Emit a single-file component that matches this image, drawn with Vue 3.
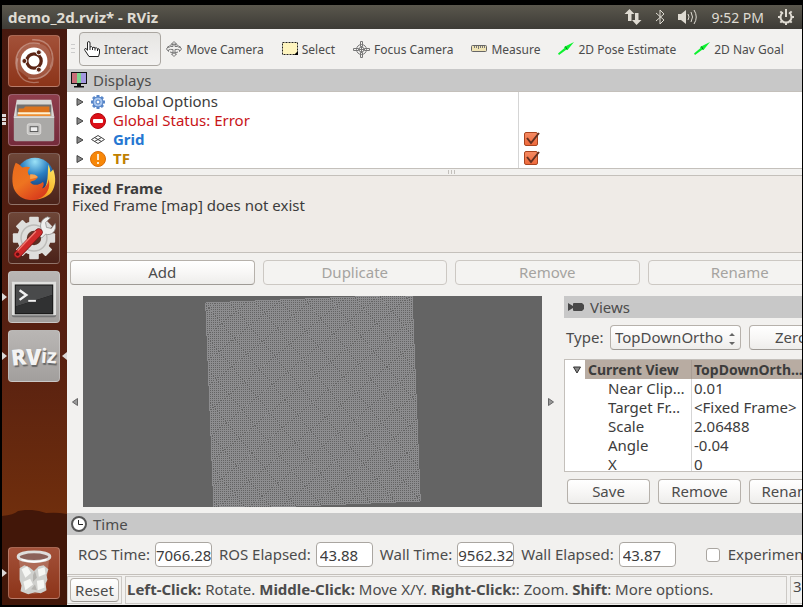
<script setup>
import { ref } from 'vue'

const tools = [
  { name: 'Interact', icon: 'hand' },
  { name: 'Move Camera', icon: 'move' },
  { name: 'Select', icon: 'select' },
  { name: 'Focus Camera', icon: 'focus' },
  { name: 'Measure', icon: 'ruler' },
  { name: '2D Pose Estimate', icon: 'arrow' },
  { name: '2D Nav Goal', icon: 'arrow' },
]
const activeTool = ref('Interact')

const displays = ref([
  { name: 'Global Options', icon: 'gear', kind: 'plain' },
  { name: 'Global Status: Error', icon: 'error', kind: 'error' },
  { name: 'Grid', icon: 'grid', kind: 'ok', toggle: true, on: true },
  { name: 'TF', icon: 'warn', kind: 'warn', toggle: true, on: true },
])

const properties = [
  ['Near Clip…', '0.01'],
  ['Target Fr…', '<Fixed Frame>'],
  ['Scale', '2.06488'],
  ['Angle', '-0.04'],
  ['X', '0'],
]

const times = [
  { label: 'ROS Time:', value: '7066.28', cut: true },
  { label: 'ROS Elapsed:', value: '43.88' },
  { label: 'Wall Time:', value: '9562.32', cut: true },
  { label: 'Wall Elapsed:', value: '43.87' },
]

// Grid display: 100 x 100 cells seen from above at the view's scale and angle.
const scale = 2.06488
const angle = 0.04
const half = 50 * scale
const cos = Math.cos(angle)
const sin = Math.sin(angle)
const project = (x, y) => `${(x * cos + y * sin).toFixed(3)} ${(y * cos - x * sin).toFixed(3)}`
let gridPath = ''
for (let i = -50; i <= 50; i++) {
  const p = i * scale
  gridPath += `M${project(p, -half)}L${project(p, half)}M${project(-half, p)}L${project(half, p)}`
}

const gearTeeth = [0, 45, 90, 135, 180, 225, 270, 315]
</script>

<template>
  <div class="screen">
    <header class="topbar">
      <h1>demo_2d.rviz* - RViz</h1>
      <div class="indicators">
        <svg width="18" height="18" viewBox="0 0 18 18"><path d="M5.500 1L10.500 6H7.500v7H4V6H.5z" /><path d="M12.500 17L17.500 12h-3V5H11v7H8z" /></svg>
        <svg width="10" height="18" viewBox="0 0 10 18"><path class="line" d="M1 5l8 7-4 4V2l4 4-8 7" /></svg>
        <svg width="20" height="18" viewBox="0 0 20 18"><path d="M0 6h3l5-4v14l-5-4H0z" /><path class="line" d="M10 6q2 3 0 6M13 4q3 5 0 10M16 2q4.500 7 0 14" /></svg>
        <time>9:52 PM</time>
        <svg width="18" height="18" viewBox="0 0 18 18">
          <path class="ring" d="M6 4.500a5.500 5.500 0 1 0 6 0" />
          <rect x="8" y="1" width="2" height="8" />
          <rect v-for="a in gearTeeth.slice(1)" :key="a" x="8" y="1" width="2" height="3" :transform="`rotate(${a} 9 9)`" />
        </svg>
      </div>
    </header>

    <nav class="launcher" aria-label="Launcher">
      <button class="tile orange" aria-label="Dash">
        <svg viewBox="0 0 52 52">
          <g fill="none" stroke="#fff" stroke-opacity=".3" stroke-width="1.500"><path d="M8 34C4 16 16 4 32 8M24 4c18-1 25 13 19 29M45 18c4 18-10 29-25 26M31 48C14 51 5 38 9 23" /></g>
          <path d="M8 34C4 16 16 4 32 8c9 2 14 10 11 25-3 12-18 15-25 9" fill="#fff" opacity=".14" />
          <circle cx="26" cy="26" r="14" fill="#fff" />
          <circle cx="26" cy="26" r="7.500" fill="none" stroke="#5b2414" stroke-width="3.400" />
          <g stroke="#fff" stroke-width="1"><circle cx="16" cy="26" r="2.600" fill="#5b2414" /><circle cx="31" cy="17" r="2.600" fill="#5b2414" /><circle cx="31" cy="35" r="2.600" fill="#5b2414" /></g>
        </svg>
      </button>
      <button class="tile plum pips" aria-label="Files">
        <svg viewBox="0 0 52 52">
          <path d="M8 5h36l3 17H5z" fill="#d8d8d5" /><path d="M8 10h36v14H8z" fill="#72706e" />
          <path d="M10 14h5l2-2h25v12H10z" fill="#dc741d" /><path d="M9 18h34v4H9z" fill="#fff0d0" /><path d="M9 20h34v3H9z" fill="#ee8e31" />
          <path d="M5 22h42v24q0 2-2 2H7q-2 0-2-2z" fill="#aaa9a7" /><path d="M5 22h42v2H5z" fill="#dedddb" />
          <rect x="19" y="30" width="14" height="11" rx="2" fill="#c6c5c3" stroke="#dddcda" /><rect x="22" y="33" width="8" height="5" fill="#eee" stroke="#555" />
        </svg>
      </button>
      <button class="tile dark" aria-label="Firefox">
        <svg viewBox="0 0 52 52">
          <defs>
            <radialGradient id="globe" cx=".5" cy=".1" r=".8"><stop offset="0" stop-color="#9be2f7" /><stop offset=".45" stop-color="#2a7fc2" /><stop offset="1" stop-color="#122b66" /></radialGradient>
            <linearGradient id="fox" x1="0" y1="0" x2=".7" y2="1"><stop offset="0" stop-color="#e96a1c" /><stop offset=".5" stop-color="#ee7420" /><stop offset="1" stop-color="#d83a1c" /></linearGradient>
            <linearGradient id="tail" x1="1" y1="0" x2=".3" y2="1"><stop offset="0" stop-color="#fdea6a" /><stop offset=".6" stop-color="#f8b62c" /><stop offset="1" stop-color="#e8641d" /></linearGradient>
          </defs>
          <circle cx="27" cy="24" r="20" fill="url(#globe)" />
          <path d="M41 11c1 3 2 5 2 8l3-3c3 8 3 17-2 24-8 9-24 10-33 2 12 3 25-1 28-11 2-7 1-14 2-20z" fill="url(#tail)" />
          <path d="M7 9c3 1 5 3 7 5 3-1 6-1 8 0-3 3-3 5-1 8 3 0 6 0 9 2-1 3-5 4-8 5 3 5 10 3 13 0 2 1 1 5-1 7 4-1 7-5 7-10 3 9-2 17-9 20-11 5-23 0-27-10C2 27 4 15 7 9z" fill="url(#fox)" />
          <path d="M22 21c3 0 6 0 8 3-2 1-5 2-8 2z" fill="#f7a24f" />
        </svg>
      </button>
      <button class="tile dark" aria-label="System Settings">
        <svg viewBox="0 0 52 52">
          <g fill="#dededc"><rect v-for="a in gearTeeth" :key="a" x="21" y="4" width="10" height="12" rx="1" :transform="`rotate(${a} 26 26)`" /></g>
          <circle cx="26" cy="26" r="12.500" fill="none" stroke="#dededc" stroke-width="10" /><circle cx="26" cy="26" r="13.500" fill="none" stroke="#bcbbb8" stroke-width="1.500" />
          <path d="M30 22l4-4c-3-6 0-12 6-14l3 1-5 5 1 5 5 1 4-5c2 8-4 13-10 11l-4 4z" fill="#efefed" stroke="#8d8c8a" stroke-width=".8" />
          <path d="M9 43L31 20" stroke="#7e1416" stroke-width="8" stroke-linecap="round" /><path d="M9 43L31 20" stroke="#cf2b2b" stroke-width="6.500" stroke-linecap="round" /><path d="M9 39L28 19" stroke="#ee7b72" stroke-width="1.500" /><circle cx="9" cy="43" r="1.800" fill="#5f0f12" />
        </svg>
      </button>
      <button class="tile grey running" aria-label="Terminal">
        <svg viewBox="0 0 52 52">
          <rect x="3" y="10" width="46" height="37" rx="2" fill="#747474" /><rect x="3" y="10" width="46" height="35" rx="1" fill="#e0e0de" /><rect x="6" y="13" width="40" height="31" fill="#151515" />
          <path d="M7 14h38v10L7 36z" fill="#494a4b" /><path d="M7 36l38-12v19H7z" fill="#303132" />
          <path d="M11 19l7 5-7 5" fill="none" stroke="#f2f2f2" stroke-width="2.500" /><path d="M20 30h8" stroke="#f2f2f2" stroke-width="2" />
        </svg>
      </button>
      <button class="tile grey running focused" aria-label="RViz"><span class="rviz"><b>R</b><b>V</b><i>i</i><i>z</i></span></button>
      <button class="tile orange running trash" aria-label="Trash">
        <svg viewBox="0 0 52 52">
          <path d="M10 9h32l-4 36q-12 5-24 0z" fill="#fff" opacity=".2" />
          <path d="M11 21l5-3 5 2 5 4 5-5 5-1 5 4-2 6 1 5-2 4 1 7-6 3-6-1-7 2-8-3 1-6-2-6z" fill="#d0d1ce" />
          <path d="M13 22l6-3 4 7-6 5zM30 22l7-2 1 7-7 3zM15 35l7-3 3 6-8 6zM29 34l7-1 1 8-7 3z" fill="#f5f6f3" /><path d="M25 28l2-4 2 7-4 4zM23 43l4-5 2 6z" fill="#b4b3af" />
          <ellipse cx="26" cy="9" rx="16.500" ry="5" fill="#8b625a" stroke="#dededc" stroke-width="3" /><path d="M13 12q13 5 26 0" stroke="#fff" stroke-width="1.500" fill="none" />
        </svg>
      </button>
      <svg class="hill" viewBox="0 0 65 95" preserveAspectRatio="none"><path d="M0 6Q12 5 16 1Q30-2 44 3Q55 2 65 4V95H0z" /></svg>
    </nav>

    <main class="window">
      <div class="content">
        <div class="toolbar" role="toolbar" aria-label="Tools">
          <span class="grip"></span>
          <button v-for="t in tools" :key="t.name" class="tool" :class="{ active: activeTool === t.name }" @click="activeTool = t.name">
            <svg v-if="t.icon === 'hand'" width="16" height="16" viewBox="0 0 16 16"><path d="M3.500 9V2q0-1.500 1.200-1.500T6 2v4q2-1 2.500.500 2-.800 2.500.500 2-.500 2.500.700 2-.200 2 1.300v3l-1 3.500H5L1 9.500Q0 8 1.200 7.500t2.300 2M6 6v3M8.500 6.500V9M11 7v2.500M13.500 8v2" fill="#fff" stroke="#222" /></svg>
            <svg v-else-if="t.icon === 'move'" width="16" height="16" viewBox="0 0 16 16"><path d="M8 .5L5.500 3H7v2.500Q4 5 2.500 6.500V5L.5 8l2 2.500V9Q4 8 7 8.500V13H5.500L8 15.500l2.500-2.500H9V8.500Q12 8 13.500 9v1.500l2-2.500-2-3v1.500Q12 5 9 5.500V3h1.500zM3.500 4.500Q8 1.500 12.500 4.500M4 11q4 2 8 0" fill="none" stroke="#777" /></svg>
            <svg v-else-if="t.icon === 'select'" width="16" height="14" viewBox="0 0 16 14"><rect x=".5" y=".5" width="15" height="12" fill="#fff5bf" stroke="#222" stroke-dasharray="2 1" /><path d="M16 9v4h-4z" fill="#000" /></svg>
            <svg v-else-if="t.icon === 'focus'" width="17" height="17" viewBox="0 0 17 17"><g fill="none" stroke="#777"><circle cx="8.500" cy="8.500" r="5" /><circle cx="8.500" cy="8.500" r="2.500" /><path d="M7.500.5h2v5h-2zM7.500 11.500h2v5h-2zM.5 7.500h5v2h-5zM11.500 7.500h5v2h-5zM8.500 5v7M5 8.500h7" /></g></svg>
            <svg v-else-if="t.icon === 'ruler'" width="16" height="8" viewBox="0 0 16 8"><rect x=".5" y=".5" width="15" height="6" rx="1" fill="#efe3b4" stroke="#666" /><path d="M3.500 1v2M5.500 1v2M7.500 1v3M9.500 1v2M11.500 1v2M13.500 1v2" stroke="#777" /></svg>
            <svg v-else width="16" height="14" viewBox="0 0 16 14"><path d="M0 11.500L6.500 6 6 5 16 0 9.500 8 8.500 7.500 1 13z" fill="#0df22f" /><path d="M7.500 4.500l1.500 3" stroke="#067a1a" /></svg>
            <span>{{ t.name }}</span>
          </button>
        </div>

        <h2 class="panel-title">
          <svg width="16" height="16" viewBox="0 0 16 16"><rect x=".5" y=".5" width="15" height="11" fill="#222" stroke="#111" /><path d="M1 1h5v10H1z" fill="#c96e78" /><path d="M6 1h4v10H6z" fill="#7dd58b" /><path d="M10 1h5v10h-5z" fill="#a397df" /><path d="M6 12h4v2h3v1.500H3V14h3z" fill="#111" /></svg>
          Displays
        </h2>
        <ul class="tree">
          <li v-for="d in displays" :key="d.name" :class="d.kind">
            <div class="name">
              <svg class="expander" width="8" height="8" viewBox="0 0 8 8"><path d="M1 .5v7L7 4z" fill="#888" stroke="#444" /></svg>
              <svg v-if="d.icon === 'gear'" class="icon" viewBox="0 0 16 16"><g fill="#5b88c9"><rect v-for="a in gearTeeth" :key="a" x="6.500" y="1" width="3" height="3" :transform="`rotate(${a} 8 8)`" /></g><circle cx="8" cy="8" r="5" fill="#a9c6ee" stroke="#4a7cc4" /><circle cx="8" cy="8" r="2" fill="#fff" stroke="#4a7cc4" /></svg>
              <svg v-else-if="d.icon === 'error'" class="icon" viewBox="0 0 16 16"><circle cx="8" cy="8" r="7.500" fill="#dc1018" stroke="#b2060c" /><rect x="3" y="6" width="10" height="4" rx="1" fill="#fff" /></svg>
              <svg v-else-if="d.icon === 'grid'" class="icon" viewBox="0 0 16 16"><path d="M1.500 7.500l6.500-4 6.500 4-6.500 4zM4.500 5.500l7 4M11.500 5.500l-7 4" fill="none" stroke="#444" /></svg>
              <svg v-else class="icon" viewBox="0 0 16 16"><circle cx="8" cy="8" r="7.500" fill="#f78708" stroke="#d96c05" /><path d="M8 3v6M8 11v2" stroke="#ffe9c8" stroke-width="2" /></svg>
              <span>{{ d.name }}</span>
            </div>
            <label v-if="d.toggle" class="toggle"><input v-model="d.on" type="checkbox" :aria-label="d.name" /><svg v-if="d.on" width="16" height="15" viewBox="0 0 16 15"><path d="M3 6l4 5 8-10" fill="none" stroke="#643020" stroke-width="2" /></svg></label>
          </li>
        </ul>
        <div class="splitter"><i></i><i></i><i></i></div>
        <section class="help"><strong>Fixed Frame</strong><p>Fixed Frame [map] does not exist</p></section>
        <div class="actions">
          <button class="btn">Add</button>
          <button class="btn" disabled>Duplicate</button>
          <button class="btn" disabled>Remove</button>
          <button class="btn" disabled>Rename</button>
        </div>

        <div class="middle">
          <button class="collapse" aria-label="Hide left panels"><svg width="6" height="8" viewBox="0 0 6 8"><path d="M5.500.5v7L.5 4z" fill="#999" stroke="#666" /></svg></button>
          <div class="render">
            <svg viewBox="-110 -110 220 220" width="220" height="220"><path :d="gridPath" /></svg>
          </div>
          <button class="collapse right" aria-label="Hide right panels"><svg width="6" height="8" viewBox="0 0 6 8"><path d="M.5.5v7l5-3.500z" fill="#999" stroke="#666" /></svg></button>
          <section class="views">
            <h2 class="panel-title">
              <svg width="16" height="16" viewBox="0 0 16 16"><path d="M0 4l5 3V5q0-1 1-1h8l2 2v4l-2 2H6q-1 0-1-1V9l-5 3z" fill="#484848" /></svg>
              Views
            </h2>
            <div class="type-row">
              <label for="view-type">Type:</label>
              <div class="combo">
                <select id="view-type" class="btn"><option>TopDownOrtho</option></select>
                <svg width="6" height="12" viewBox="0 0 6 12"><path d="M0 3l3-3 3 3zM0 9l3 3 3-3z" fill="#666" /></svg>
              </div>
              <button class="btn">Zero</button>
            </div>
            <table class="props">
              <thead><tr><th><svg width="8" height="8" viewBox="0 0 8 8"><path d="M.5 1h7L4 7z" fill="#888" stroke="#333" /></svg><span>Current View</span></th><th>TopDownOrth...</th></tr></thead>
              <tbody><tr v-for="[k, v] in properties" :key="k"><td>{{ k }}</td><td>{{ v }}</td></tr></tbody>
            </table>
            <div class="view-actions"><button class="btn">Save</button><button class="btn">Remove</button><button class="btn">Rename</button></div>
          </section>
        </div>

        <h2 class="panel-title">
          <svg width="16" height="16" viewBox="0 0 16 16"><circle cx="8" cy="8" r="7" fill="#fff" stroke="#555" stroke-width="2" /><path d="M7.500 4v4.500H12" fill="none" stroke="#222" /></svg>
          Time
        </h2>
        <div class="times">
          <label v-for="t in times" :key="t.label"><span>{{ t.label }}</span><input type="text" readonly :class="{ cut: t.cut }" :value="t.value" /></label>
          <label class="experimental"><input type="checkbox" />Experimental</label>
        </div>
        <footer class="status">
          <div class="cell"><button class="btn">Reset</button></div>
          <p class="cell hint"><b>Left-Click:</b> Rotate. <b>Middle-Click:</b> Move X/Y. <b>Right-Click:</b>: Zoom. <b>Shift</b>: More options.</p>
          <div class="cell fps">31 fps</div>
        </footer>
      </div>
    </main>
  </div>
</template>

<style>
body { background: #000; }
</style>

<style scoped>
* { box-sizing: border-box; }
h1, h2, p, ul { margin: 0; padding: 0; }
button, input, select { font: inherit; color: inherit; }
button { padding: 0; border: 0; background: none; }
svg { display: block; flex: none; }

.screen {
  display: grid;
  grid-template: 24px minmax(0, 1fr) / 65px minmax(0, 1fr);
  min-height: 100vh;
  padding: 5px 1px 2px 2px;
  background: #000;
  color: #4c4c4c;
  font: 15px/19px "Noto Sans", "Open Sans", sans-serif;
}

.topbar {
  grid-column: 1 / -1;
  display: flex;
  align-items: center;
  justify-content: space-between;
  padding: 0 7px 0 6px;
  background: linear-gradient(#5a574d, #3d3b36);
  color: #dfdbd2;
}
.topbar h1 { font-size: 15px; font-weight: 700; }
.topbar time { font-size: 14px; }
.indicators { display: flex; align-items: center; gap: 13px; }
.indicators svg { fill: #dfdbd2; }
.indicators .line { fill: none; stroke: #dfdbd2; stroke-width: 1; }
.indicators .ring { fill: none; stroke: #dfdbd2; stroke-width: 2; }

.launcher {
  position: relative;
  display: flex;
  flex-direction: column;
  gap: 7px;
  padding: 6px;
  background: linear-gradient(#47190f, #572011 55%, #6c2c0d 80%, #7b370d);
}
.hill { position: absolute; left: 0; bottom: 0; width: 100%; height: 95px; fill: #421709; }
.tile {
  position: relative;
  z-index: 1;
  flex: none;
  width: 52px;
  height: 52px;
  border-radius: 4px;
  border: 1px solid rgba(255, 255, 255, .25);
}
.tile svg { width: 50px; height: 50px; }
.orange { background: linear-gradient(#a35139, #8c3419); }
.plum { background: linear-gradient(#8e3e4c, #752b3b); }
.dark { background: linear-gradient(#6e4638, #4b2219); }
.grey { background: linear-gradient(#b9b6b4, #a29f9d); }
.trash { margin-top: auto; }
.running::before, .focused::after {
  content: "";
  position: absolute;
  top: 21px;
  left: -7px;
  border: solid transparent;
  border-width: 4px 0 4px 5px;
  border-left-color: #dcd9d7;
}
.focused::after { left: auto; right: -8px; border-width: 4px 5px 4px 0; border-right-color: #dcd9d7; }
.pips::before {
  content: "";
  position: absolute;
  top: 19px;
  left: -7px;
  width: 4px;
  height: 11px;
  background: repeating-linear-gradient(#dcd9d7 0 3px, transparent 3px 4px);
}
.rviz {
  display: flex;
  align-items: center;
  justify-content: center;
  color: #f3f3f3;
  font: 700 22px/50px "Open Sans", sans-serif;
  text-shadow: 1px 2px 1px #666;
}
.rviz b:first-child { transform: rotate(-6deg); }
.rviz i { font-size: 20px; font-style: normal; transform: rotate(4deg); }

.window { display: flex; overflow: hidden; background: #f2f1ef; }
/* The window runs past the right edge of the screen. */
.content { flex: none; display: flex; flex-direction: column; width: calc(100% + 34px); }

.toolbar { display: flex; align-items: center; height: 40px; padding-left: 4px; font-size: 12px; }
.grip { width: 4px; height: 10px; margin-right: 4px; background: repeating-linear-gradient(#ccc 0 1px, transparent 1px 4px); }
.tool { display: flex; align-items: center; gap: 4px; padding: 0 9px; height: 34px; }
.tool.active {
  margin-right: -4px;
  padding: 0 12px 0 4px;
  border: 1px solid #aaa6a1;
  border-radius: 4px;
  background: linear-gradient(#e6e5e3, #f3f2f1);
}

.panel-title {
  display: flex;
  flex: none;
  align-items: center;
  gap: 6px;
  height: 22px;
  padding-left: 4px;
  background: #c8c8c8;
  font-size: 15px;
  font-weight: 400;
}

.tree {
  height: 78px;
  border: solid #c4c0bb;
  border-width: 1px 0;
  background: linear-gradient(#d5d5d5, #d5d5d5) 451px 0 / 1px 100% no-repeat #fff;
  color: #3c3c3c;
  list-style: none;
}
.tree li { display: grid; grid-template-columns: 457px auto; align-items: center; height: 19px; }
.name { display: flex; align-items: center; padding-left: 9px; }
.name .expander { margin-right: 6px; }
.name .icon { width: 16px; height: 16px; margin-right: 7px; }
.error { color: #c81418; }
.ok { color: #2577d2; font-weight: 700; }
.warn { color: #c08000; font-weight: 700; }
.toggle { position: relative; width: 16px; height: 15px; }
.toggle input { appearance: none; display: block; width: 14px; height: 14px; margin: 0; border: 1px solid #a9441f; border-radius: 2px; background: linear-gradient(#f58a62, #ee6a3c); }
.toggle svg { position: absolute; inset: 0; }

.splitter { display: flex; flex: none; justify-content: center; gap: 2px; height: 6px; padding: 1px 0; }
.splitter i { width: 1px; background: #c3c0bc; }
.help { flex: none; height: 78px; padding: 4px 5px; border: solid #c4c0bb; border-width: 1px 0; background: #efebe7; color: #3c3c3c; line-height: 17px; }
.help strong { display: block; }

.btn {
  height: 25px;
  border: 1px solid #b6b1ab;
  border-bottom-color: #9e9a95;
  border-radius: 4px;
  background: linear-gradient(#fff, #f8f7f6 50%, #eeedeb);
  line-height: 19px;
}
.btn:disabled { border-color: #ccc8c3; background: #f4f3f1; color: #a5a3a0; }
.actions { display: grid; grid-template-columns: repeat(4, 1fr); gap: 8px; padding: 7px 4px 0 3px; }

.middle { display: flex; flex: 1; padding: 11px 0 6px; }
.collapse { display: flex; align-items: center; justify-content: center; width: 16px; }
.collapse.right { width: 18px; }
.render { position: relative; flex: 1; overflow: hidden; min-width: 0; background: #646464; }
.render svg { position: absolute; left: 50%; top: 50%; margin: -110px; }
.render path { fill: none; stroke: #8d8d8f; stroke-width: 1; shape-rendering: crispEdges; }
.views { display: flex; flex-direction: column; width: 272px; margin-left: 4px; }
.type-row { display: grid; grid-template-columns: 36px 131px 84px; column-gap: 8px; align-items: center; padding: 7px 0 9px 2px; white-space: nowrap; }
.combo { position: relative; }
.combo select { appearance: none; display: block; width: 100%; padding: 0 4px; }
.combo svg { position: absolute; right: 6px; top: 8px; }

.props { display: block; flex: 1 0 auto; height: 113px; overflow: hidden; border: 1px solid #c4c0bb; background: #fff; color: #3c3c3c; border-spacing: 0; }
.props tr { display: grid; grid-template-columns: 127px 1fr; height: 19px; }
.props td, .props th { padding: 0 0 0 2px; text-align: left; white-space: nowrap; }
.props th { font-size: 14px; }
.props td:first-child { padding-left: 43px; border-right: 1px solid #d5d5d5; }
.props th:last-child { background: #b8aca2; }
.props th:first-child { display: flex; align-items: center; padding: 0 0 0 8px; gap: 4px; border-right: 1px solid #a99d94; }
.props th span { flex: 1; padding-left: 3px; background: #b8aca2; }
.view-actions { display: grid; grid-template-columns: repeat(3, 1fr); gap: 8px; padding: 7px 4px 3px 3px; }

.times { display: flex; align-items: center; gap: 7px; height: 39px; padding-left: 11px; white-space: nowrap; }
.times label { display: flex; align-items: center; gap: 5px; }
.times input[type="text"] { width: 57px; height: 25px; padding: 0 3px; border: 1px solid #aaa6a1; border-radius: 4px; background: #fff; color: #3c3c3c; }
.times input.cut { padding: 0; }
.times .experimental { gap: 8px; margin-left: 23px; }
.times input[type="checkbox"] { appearance: none; width: 14px; height: 14px; margin: 0; border: 1px solid #aaa6a1; border-radius: 3px; background: #fff; }

.status { display: flex; gap: 3px; height: 31px; padding: 1px 0; border-top: 1px solid #c4c0bb; white-space: nowrap; }
.cell { display: flex; align-items: center; height: 28px; padding: 0 2px; border: 1px solid #ccc9c5; }
.cell .btn { width: 49px; height: 24px; }
.hint { display: block; flex: 1; padding: 0 1px; line-height: 25px; }
.fps { align-items: flex-start; width: 46px; }
</style>
